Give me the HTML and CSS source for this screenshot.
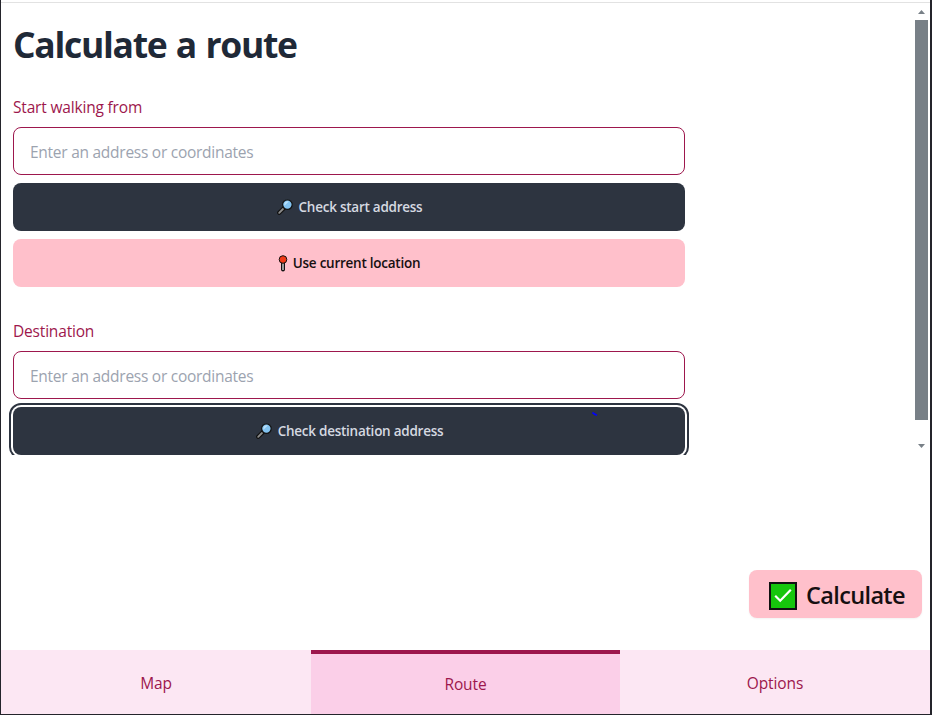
FILE: index.html
```html
<!DOCTYPE html>
<html lang="en">
<head>
<meta charset="utf-8">
<title>Calculate a route</title>
<link rel="stylesheet" href="styles.css">
</head>
<body>
<svg class="defs" width="0" height="0" aria-hidden="true">
  <symbol id="magnifier" viewBox="0 0 16 16">
    <path d="M2.2 13.8 6.6 9.4" stroke="#111" stroke-width="4.2" stroke-linecap="round"/>
    <path d="M2.2 13.8 6 10" stroke="#8b8b8b" stroke-width="1.9" stroke-linecap="round"/>
    <circle cx="10.4" cy="5.6" r="4.8" fill="#83c3f1" stroke="#111" stroke-width="1.2"/>
    <path d="M7.4 6.8 11.8 2.4A3.6 3.6 0 0 0 7.4 6.8Z" fill="#b9e0fa"/>
  </symbol>
</svg>
<div class="app">
  <main class="scroller">
    <form class="form">
      <h1 class="title"><span>Calculate a route</span></h1>
      <label class="label start" for="start">Start walking from</label>
      <input class="input" id="start" placeholder="Enter an address or coordinates">
      <button class="btn dark" type="button"><svg class="glass"><use href="#magnifier"/></svg><span>Check start address</span></button>
      <button class="btn pink" type="button"><svg class="pin" viewBox="0 0 10 17"><path d="M5 7V14.6" stroke="#111" stroke-width="4" stroke-linecap="round"/><path d="M5 7V15" stroke="#999" stroke-width="2"/><circle cx="5" cy="4.5" r="3.8" fill="#f03a17" stroke="#111"/></svg><span>Use current location</span></button>
      <label class="label dest" for="dest">Destination</label>
      <input class="input" id="dest" placeholder="Enter an address or coordinates">
      <button class="btn dark focused" type="button"><svg class="glass"><use href="#magnifier"/></svg><span>Check destination address</span><svg class="speck" viewBox="0 0 6 4"><path d="M.5.5 5 3.4M.5 1 3.5 3" stroke="#00f" stroke-width="1.4"/></svg></button>
    </form>
    <div class="scrollbar">
      <svg class="arrow" viewBox="0 0 7 4"><path d="M0 4 3.5 0 7 4Z"/></svg>
      <div class="thumb"></div>
      <svg class="arrow" viewBox="0 0 7 4"><path d="M0 0H7L3.5 4Z"/></svg>
    </div>
  </main>
  <div class="actions">
    <button class="calculate" type="button"><svg class="check" viewBox="0 0 28 28"><rect x="1" y="1" width="26" height="26" fill="#16c60c" stroke="#111" stroke-width="2"/><path d="M6.2 13.8 11.2 18.8 21.8 7.7" fill="none" stroke="#fff" stroke-width="2.2"/></svg><span>Calculate</span></button>
  </div>
  <nav class="tabs">
    <a class="tab">Map</a>
    <a class="tab active">Route</a>
    <a class="tab">Options</a>
  </nav>
</div>
</body>
</html>
```
FILE: styles.css
```css
* { box-sizing: border-box; }
body { margin: 0; background: #fff; font: 16px/24px "Open Sans", "Noto Sans", sans-serif; color: #1f2937; overflow: hidden; }
.defs { position: absolute; }
.app { height: 715px; padding-top: 2px; border: solid #24242b; border-width: 0 2px 1px 1px; display: flex; flex-direction: column; }
.scroller { height: 453px; flex: none; border-top: 1px solid #e2e2e2; display: flex; justify-content: space-between; overflow: hidden; }
.form { width: 672px; margin-left: 12px; display: flex; flex-direction: column; }
.title { margin: 21px 0 0; font-size: 35.5px; line-height: 40px; font-weight: 700; letter-spacing: -1.3px; word-spacing: 1.5px; white-space: nowrap; }
.label { color: #9d174d; font-size: 15.5px; letter-spacing: -.18px; }
.start { margin: 31px 0 8px; }
.dest { margin: 32px 0 8px; }
.input { height: 48px; flex: none; padding: 2px 16px 0; border: 1px solid #9d174d; border-radius: 8px; background: #fff; font: 15.5px "Open Sans", sans-serif; letter-spacing: -.26px; outline: 0; }
.input::placeholder { color: #9ca3af; opacity: 1; }
.btn { height: 48px; flex: none; margin: 8px 0 0; padding: 0; border: 0; border-radius: 8px; display: flex; align-items: center; justify-content: center; gap: 5px; font: 600 13.5px "Open Sans", sans-serif; letter-spacing: -.25px; }
.dark { background: #2d3440; color: #d5d9e1; gap: 6px; padding-left: 1px; }
.pink { background: #ffc0cb; color: #160f11; }
.focused { position: relative; outline: 2px solid #2d3440; outline-offset: 2px; }
.glass { width: 16px; height: 16px; }
.pin { width: 10px; height: 17px; }
.speck { position: absolute; left: 579px; top: 5px; width: 6px; height: 4px; }
.scrollbar { width: 13px; margin-right: 2px; display: flex; flex-direction: column; align-items: center; padding: 7px 0 0; }
.arrow { width: 7px; height: 4px; flex: none; fill: #788087; }
.thumb { width: 13px; height: 400px; flex: none; margin: 6px 0 24px; background: #788087; }
.actions { flex: 1; display: flex; justify-content: flex-end; align-items: flex-end; padding: 0 8px 32px; }
.calculate { width: 173px; height: 48px; padding: 2px 0 0 3px; border: 0; border-radius: 8px; background: #ffc0cb; color: #160f11; display: flex; align-items: center; justify-content: center; gap: 9px; font: 600 23.5px "Open Sans", sans-serif; letter-spacing: -.65px; box-shadow: 0 1px 2px #0000000d; }
.check { width: 28px; height: 28px; margin-top: 1px; }
.tabs { height: 64px; flex: none; display: grid; grid-template-columns: 310px 309px 310px; }
.tab { display: flex; align-items: center; justify-content: center; background: #fce7f3; color: #9d174d; font-size: 15.5px; letter-spacing: -.1px; padding-top: 2px; }
.active { background: #fbcfe8; border-top: 4px solid #9d174d; padding-top: 0; }
```
